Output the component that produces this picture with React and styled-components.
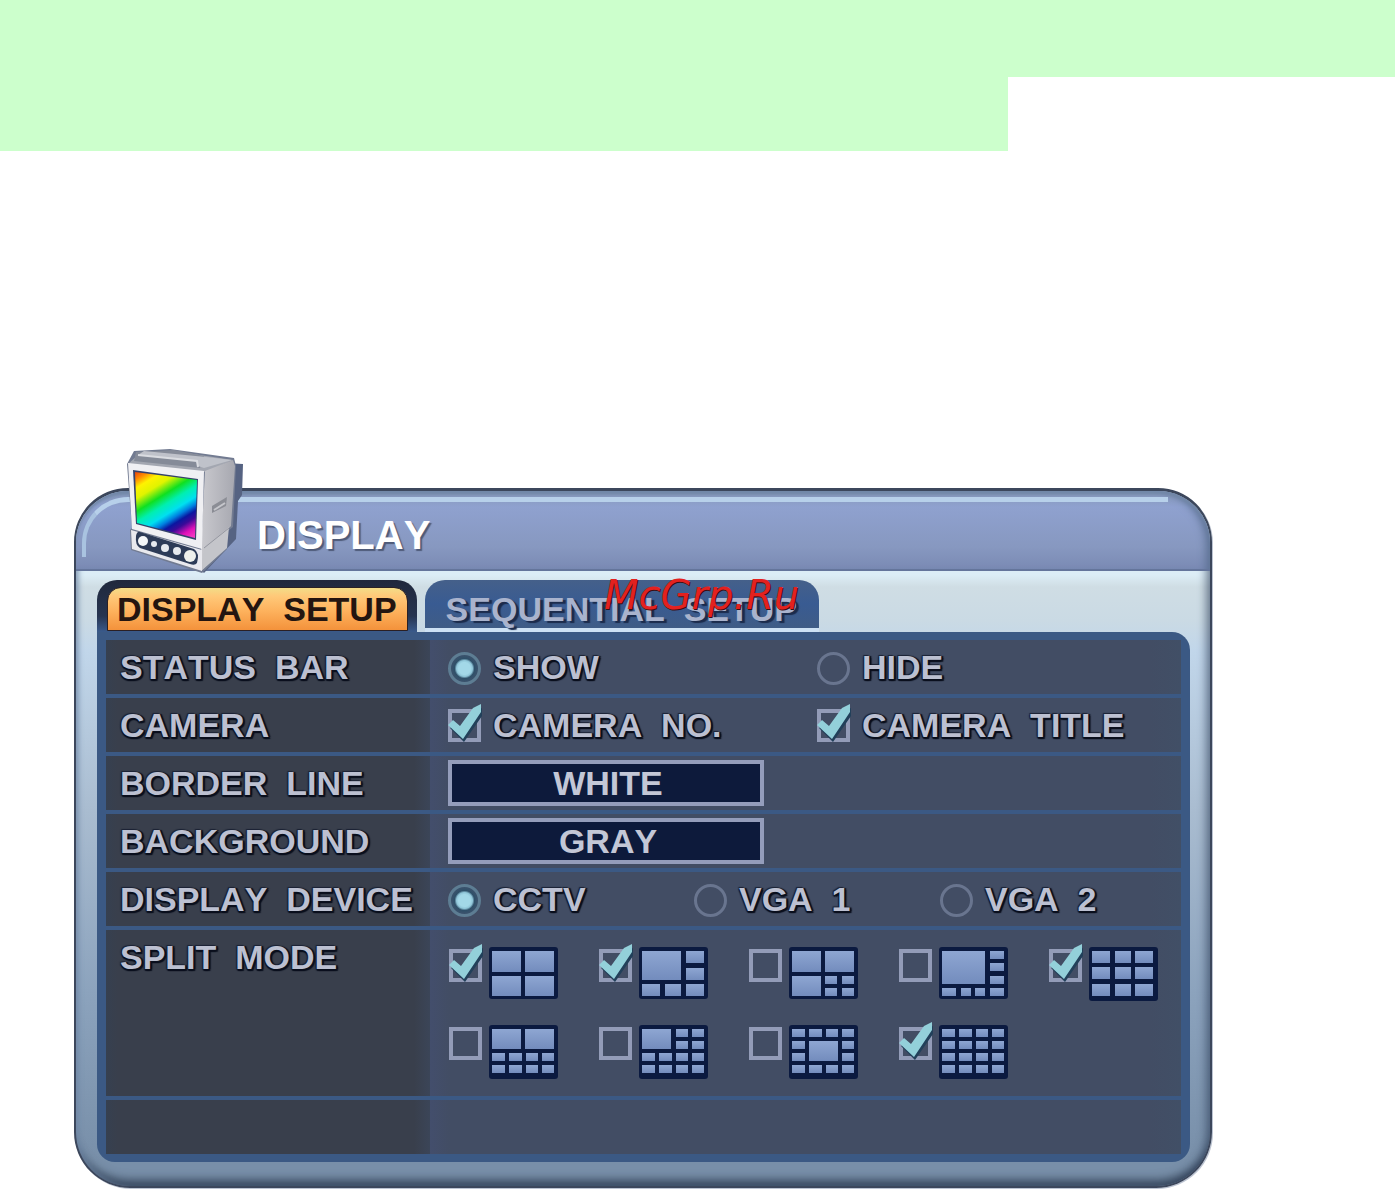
import React, { useState } from 'react'
import styled, { createGlobalStyle } from 'styled-components'

const GlobalStyle = createGlobalStyle`
  * { box-sizing: border-box; }

  body {
    margin: 0;
    background: #fff;
    font-family: 'Liberation Sans', Arial, sans-serif;
  }
`

const textShadow = `
  text-shadow: 2px 2px 1px #0a0f1d, -1px -1px 1px #1a2133, 2px 0 1px #0a0f1d, 0 2px 1px #0a0f1d, -1px 1px 1px #1a2133;
`

const BannerTop = styled.div`
  height: 77px;
  background: #ccffcc;
`

const BannerBottom = styled.div`
  width: 72.26%;
  height: 74px;
  background: #ccffcc;
`

const Page = styled.main`
  padding: 337px 183px 2px 74px;
`

const Window = styled.section`
  border: 2px solid #3c475c;
  border-top-width: 3px;
  border-radius: 54px 54px 56px 56px;
  background: linear-gradient(
    #dcedf6 84px, #cfdde4 96px, #cadae4 130px, #c1d6ea 160px, #a9bcd0 320px, #8ca3bd 500px, #788fa9 670px
  );
  box-shadow: 1px 1px 0 #bcc4d2,
    inset -10px 0 8px -6px rgba(45, 62, 88, 0.6),
    inset 5px 0 5px -2px rgba(110, 134, 165, 0.7),
    inset 0 -14px 10px -8px rgba(35, 48, 68, 0.75);
`

const Header = styled.header`
  position: relative;
  display: flex;
  align-items: center;
  height: 80px;
  padding: 10px 20px 0 181px;
  border-bottom: 2px solid #64759b;
  border-radius: 52px 52px 0 0;
  background: linear-gradient(#8597b8, #8fa1cf 16px, #8798c0 56px, #7a8ab4);
  box-shadow: inset 0 4px 3px -1px #7288a8, inset -8px 2px 8px -4px #5c7193;

  &:before {
    content: "";
    position: absolute;
    inset: 6px 42px 12px 6px;
    border-top: 5px solid #b7d0ea;
    border-left: 4px solid #a9c3e0;
    border-radius: 46px 0 0 0;
  }
`

const Title = styled.h1`
  position: relative;
  margin: 0;
  color: #fff;
  font-size: 40px;
  line-height: 46px;
  font-kerning: none;
  text-shadow: 2px 2px 1px #4e5a78;
`

const MonitorIcon = styled.svg`
  position: absolute;
  left: 44px;
  bottom: -12px;
  width: 130px;
  height: 140px;
`

const Body = styled.div`
  padding: 9px 20px 24px 21px;
`

const Tabs = styled.div`
  position: relative;
  display: flex;
  align-items: flex-start;
  gap: 8px;
`

const Tab = styled.button`
  border: 0;
  padding: 10px 22px 0 21px;
  height: 48px;
  border-radius: 20px 20px 0 0;
  background: linear-gradient(#45608a, #395b92 24px, #3f5c86);
  box-shadow: 0 4px 0 #cde1f4;
  color: #a9b3cd;
  font: bold 34px/38px 'Liberation Sans', Arial, sans-serif;
  font-kerning: none;
  white-space: pre;
  text-shadow: 3px 2px 1px #1b2b4c;
  cursor: pointer;
`

const ActiveTab = styled(Tab)`
  height: 52px;
  padding: 7px 9px 1px 10px;
  background: linear-gradient(#20283c, #263450 36px, #3a5a8b);
  box-shadow: none;
  color: #241510;
  text-shadow: none;

  span {
    display: block;
    padding: 0 10px 0 9px;
    height: 44px;
    line-height: 42px;
    border: 1px solid #2b2024;
    border-radius: 14px 14px 0 0;
    background: linear-gradient(#f3dd87, #ffc979 8px, #fdb05b 24px, #f4923b);
  }
`

const Watermark = styled.span`
  position: absolute;
  left: 507px;
  top: -8px;
  color: #e3211f;
  font: italic 40px/46px 'DejaVu Sans', sans-serif;
  text-shadow: 1px 1px 0 #3a0d12;
  pointer-events: none;
`

const Settings = styled.form`
  display: grid;
  gap: 4px;
  padding: 8px 9px;
  border-radius: 0 18px 18px 18px;
  background: #3b5984;
`

const Row = styled.div`
  display: grid;
  grid-template-columns: 324px 1fr;
  min-height: ${props => props.$tall ? '166px' : '54px'};
`

const LabelCell = styled.div`
  padding: 0 14px;
  background: linear-gradient(90deg, #364050, #393f4c 12px, #393f4c 308px, #3b4558);
  color: #bcc0d1;
  font-size: 34px;
  font-weight: bold;
  line-height: 54px;
  font-kerning: none;
  white-space: pre;
  ${textShadow}
`

const ValueCell = styled.div`
  display: grid;
  grid-template-columns: ${props => props.$columns || '1fr'};
  align-items: center;
  align-content: ${props => props.$top ? 'start' : 'center'};
  row-gap: 24px;
  padding: ${props => props.$top ? '17px 0 0 19px' : '0 0 0 18px'};
  background: linear-gradient(90deg, #434e6c, #424d64 20px, #424d64 720px, #414f66);
`

const Option = styled.label`
  display: flex;
  align-items: center;
  gap: 12px;
  color: #bcc0d1;
  font-size: 34px;
  font-weight: bold;
  line-height: 54px;
  font-kerning: none;
  white-space: pre;
  cursor: pointer;
  ${textShadow}
`

const SplitOption = styled.label`
  display: flex;
  align-items: flex-start;
  gap: 7px;
  height: 54px;
  cursor: pointer;
`

const Radio = styled.input`
  appearance: none;
  flex: none;
  width: 33px;
  height: 33px;
  margin: 3px 0 0;
  border: 3px solid #69758f;
  border-radius: 50%;

  &:checked {
    border-color: #5d7d93;
    background: radial-gradient(circle, #a3d8e8 6px, #8fc5d8 8px, #2f5069 10px, #3a526c 13px);
  }
`

const Check = styled.span`
  position: relative;
  flex: none;
  width: 33px;
  height: 33px;

  input {
    appearance: none;
    display: block;
    width: 33px;
    height: 33px;
    margin: 0;
    border: 4px solid #939cb8;
  }

  svg {
    position: absolute;
    left: 0;
    top: -5px;
    width: 34px;
    height: 38px;
    pointer-events: none;
  }
`

const SplitCheck = styled(Check)`
  margin-top: 2px;
`

const Select = styled.select`
  appearance: none;
  width: 316px;
  height: 46px;
  padding: 0 0 0 4px;
  border: 4px solid #949dbb;
  border-radius: 0;
  background: #0d1a3b;
  color: #c3c7d6;
  font: bold 34px/38px 'Liberation Sans', Arial, sans-serif;
  font-kerning: none;
  text-align: center;
  text-align-last: center;
`

const SplitIcon = styled.svg`
  flex: none;
  width: 69px;
  height: 54px;
`

// x, y, width, height of each tile
const X = [[3, 13], [20, 13], [37, 12], [53, 12]]
const Y = [[4, 8], [16, 8], [28, 8], [40, 8]]
const tiles = (...cells) => cells.map(([c, r]) => [X[c][0], Y[r][0], X[c][1], Y[r][1]])
const line = r => [[0, r], [1, r], [2, r], [3, r]]

const splitModes = [
  { id: 'split-4', on: true, h: 52, cells: [[3, 4, 29, 21], [36, 4, 29, 21], [3, 29, 29, 20], [36, 29, 29, 20]] },
  {
    id: 'split-6', on: true, h: 52,
    cells: [[3, 4, 39, 29], [47, 4, 18, 12], [47, 21, 18, 12], [3, 37, 18, 12], [26, 37, 16, 12], [47, 37, 18, 12]]
  },
  {
    id: 'split-7', on: false, h: 52,
    cells: [
      [3, 4, 29, 21], [36, 4, 29, 21], [3, 29, 29, 20],
      [36, 29, 12, 8], [53, 29, 12, 8], [36, 41, 12, 8], [53, 41, 12, 8]
    ]
  },
  {
    id: 'split-8', on: false, h: 52,
    cells: [
      [3, 4, 43, 33], [51, 4, 14, 8], [51, 16, 14, 8], [51, 29, 14, 8],
      [3, 41, 14, 8], [22, 41, 10, 8], [36, 41, 10, 8], [51, 41, 14, 8]
    ]
  },
  {
    id: 'split-9', on: true, h: 54,
    cells: [4, 20, 37].flatMap(y => [[3, y, 18, 12], [26, y, 16, 12], [46, y, 18, 12]])
  },
  { id: 'split-10', on: false, h: 54, cells: [[3, 4, 29, 20], [36, 4, 29, 20], ...tiles(...line(2), ...line(3))] },
  {
    id: 'split-13a', on: false, h: 54,
    cells: [[3, 4, 29, 20], ...tiles([2, 0], [3, 0], [2, 1], [3, 1], ...line(2), ...line(3))]
  },
  {
    id: 'split-13b', on: false, h: 54,
    cells: [[20, 16, 29, 20], ...tiles(...line(0), [0, 1], [3, 1], [0, 2], [3, 2], ...line(3))]
  },
  { id: 'split-16', on: true, h: 54, cells: tiles(...line(0), ...line(1), ...line(2), ...line(3)) }
]

const Checkbox = ({ box: Box = Check, defaultOn, ...rest }) => {
  const [on, setOn] = useState(defaultOn)

  return (
    <Box>
      <input type="checkbox" checked={on} onChange={() => setOn(!on)} {...rest} />
      {on &&
        <svg viewBox="0 0 34 38" aria-hidden="true">
          <path d="M2 24 L7 20 L13 25 L26 8 L34 4 L34 12 L16 38 Z" fill="#22405a" />
          <path d="M0 21 L5 16 L12 22 L25 4 L33 0 L33 8 L15 35 Z" fill="#93d0da" />
        </svg>
      }
    </Box>
  )
}

const RadioOption = ({ name, text, defaultChecked }) => (
  <Option>
    <Radio type="radio" name={name} defaultChecked={defaultChecked} />
    {text}
  </Option>
)

const Monitor = () => (
  <MonitorIcon viewBox="0 0 130 140" aria-hidden="true">
    <defs>
      <linearGradient id="rainbow" gradientUnits="userSpaceOnUse" x1="14" y1="29" x2="62" y2="107">
        <stop offset="0" stopColor="#e02a12" />
        <stop offset=".1" stopColor="#ff8a00" />
        <stop offset=".18" stopColor="#fff200" />
        <stop offset=".28" stopColor="#e0f400" />
        <stop offset=".4" stopColor="#10e020" />
        <stop offset=".5" stopColor="#00efb0" />
        <stop offset=".6" stopColor="#00e0f0" />
        <stop offset=".67" stopColor="#0080e0" />
        <stop offset=".73" stopColor="#0a16a0" />
        <stop offset=".79" stopColor="#3a0a98" />
        <stop offset=".88" stopColor="#e010b8" />
        <stop offset="1" stopColor="#ff50c8" />
      </linearGradient>
      <linearGradient id="side" x1="0" y1="0" x2="1" y2="0">
        <stop offset="0" stopColor="#c9c9ce" />
        <stop offset="1" stopColor="#a7a8b0" />
      </linearGradient>
    </defs>
    <path d="M104 22 L123 23 L122 54 L118 60 L116 98 L84 132 L78 126 Z" fill="#566382" />
    <path d="M7 23 L14 10 L50 8 L114 17 L116 25 L113 86 L108 90 L107 108 L82 132 L11 109 L10 89 L12 87 Z" fill="#727b91" />
    <path d="M8 23 L18 14 L60 11 L113 19 L86 31 Z" fill="#a3a7b1" />
    <path d="M85 30 L113 19 L115 25 L111 85 L107 89 L106 107 L81 130 L81 108 Z" fill="url(#side)" />
    <path d="M84 107 L109 86 L107 107 L81 130 Z" fill="#c4c5ca" />
    <path d="M84 107 L109 87" stroke="#94969f" strokeWidth="1" />
    <path d="M14 20 L16 11 L54 9 L84 15 L80 27 Z" fill="#858b98" />
    <path d="M18 14 L24 10 L86 16 L112 19 L84 27 L78 25 L76 20 Z" fill="#bfc2ca" />
    <path d="M18 14 L77 20 L78 26" fill="none" stroke="#dadce1" strokeWidth="2" />
    <path d="M8 22 L84 30 L82 108 L12 88 Z" fill="#f0f0f3" />
    <path d="M13 29 L78 38 L76 99 L16 83 Z" fill="#34416b" />
    <path d="M15 31 L77 39 L75 97 L17 82 Z" fill="url(#rainbow)" />
    <path d="M11 89 L82 109 L82 130 L12 108 Z" fill="#e9e9ee" />
    <path d="M20 91 L74 108 Q80 112 77 122 Q75 125 70 123 L20 107 Q15 104 16 95 Q17 90 20 91" fill="#2d3b57" />
    <circle cx="23" cy="100" r="5" fill="#f4f6f8" />
    <circle cx="34" cy="103" r="3" fill="#e6e9ee" />
    <circle cx="45" cy="107" r="4" fill="#e6e9ee" />
    <circle cx="57" cy="110" r="4" fill="#e6e9ee" />
    <circle cx="70" cy="115" r="6" fill="#eef0ec" />
    <path d="M92 65 L107 56 L106 65 L92 72 Z" fill="#8b8d95" />
    <path d="M94 69 L105 62" stroke="#c5c6cb" strokeWidth="2" />
  </MonitorIcon>
)

const App = () => (
  <>
    <GlobalStyle />
    <BannerTop />
    <BannerBottom />
    <Page>
      <Window>
        <Header>
          <Monitor />
          <Title>DISPLAY</Title>
        </Header>
        <Body>
          <Tabs>
            <ActiveTab type="button"><span>{'DISPLAY  SETUP'}</span></ActiveTab>
            <Tab type="button">{'SEQUENTIAL  SETUP'}</Tab>
            <Watermark>McGrp.Ru</Watermark>
          </Tabs>
          <Settings>
            <Row role="group" aria-labelledby="status-bar">
              <LabelCell id="status-bar">{'STATUS  BAR'}</LabelCell>
              <ValueCell $columns="369fr 364fr">
                <RadioOption name="status" text="SHOW" defaultChecked />
                <RadioOption name="status" text="HIDE" />
              </ValueCell>
            </Row>
            <Row role="group" aria-labelledby="camera">
              <LabelCell id="camera">CAMERA</LabelCell>
              <ValueCell $columns="369fr 364fr">
                <Option><Checkbox defaultOn />{'CAMERA  NO.'}</Option>
                <Option><Checkbox defaultOn />{'CAMERA  TITLE'}</Option>
              </ValueCell>
            </Row>
            <Row>
              <LabelCell as="label" htmlFor="border-line">{'BORDER  LINE'}</LabelCell>
              <ValueCell>
                <Select id="border-line"><option>WHITE</option></Select>
              </ValueCell>
            </Row>
            <Row>
              <LabelCell as="label" htmlFor="background">BACKGROUND</LabelCell>
              <ValueCell>
                <Select id="background"><option>GRAY</option></Select>
              </ValueCell>
            </Row>
            <Row role="group" aria-labelledby="device">
              <LabelCell id="device">{'DISPLAY  DEVICE'}</LabelCell>
              <ValueCell $columns="246fr 246fr 241fr">
                <RadioOption name="device" text="CCTV" defaultChecked />
                <RadioOption name="device" text="VGA  1" />
                <RadioOption name="device" text="VGA  2" />
              </ValueCell>
            </Row>
            <Row $tall role="group" aria-labelledby="split-mode">
              <LabelCell id="split-mode">{'SPLIT  MODE'}</LabelCell>
              <ValueCell $top $columns="150fr 150fr 150fr 150fr 132fr">
                {splitModes.map(({ id, on, h, cells }) => (
                  <SplitOption key={id}>
                    <Checkbox box={SplitCheck} defaultOn={on} aria-label={id} />
                    <SplitIcon viewBox="0 0 69 54" aria-hidden="true">
                      <defs>
                        <linearGradient id={`${id}-tile`} x1="0" y1="0" x2="0" y2="1">
                          <stop offset="0" stopColor="#8ea6d2" />
                          <stop offset="1" stopColor="#738cbd" />
                        </linearGradient>
                      </defs>
                      <rect width="69" height={h} rx="3" fill="#0b1a40" />
                      {cells.map(([x, y, w, height]) => (
                        <rect key={`${x}-${y}`} x={x} y={y} width={w} height={height} fill={`url(#${id}-tile)`} />
                      ))}
                    </SplitIcon>
                  </SplitOption>
                ))}
              </ValueCell>
            </Row>
            <Row>
              <LabelCell />
              <ValueCell />
            </Row>
          </Settings>
        </Body>
      </Window>
    </Page>
  </>
)

export default App
